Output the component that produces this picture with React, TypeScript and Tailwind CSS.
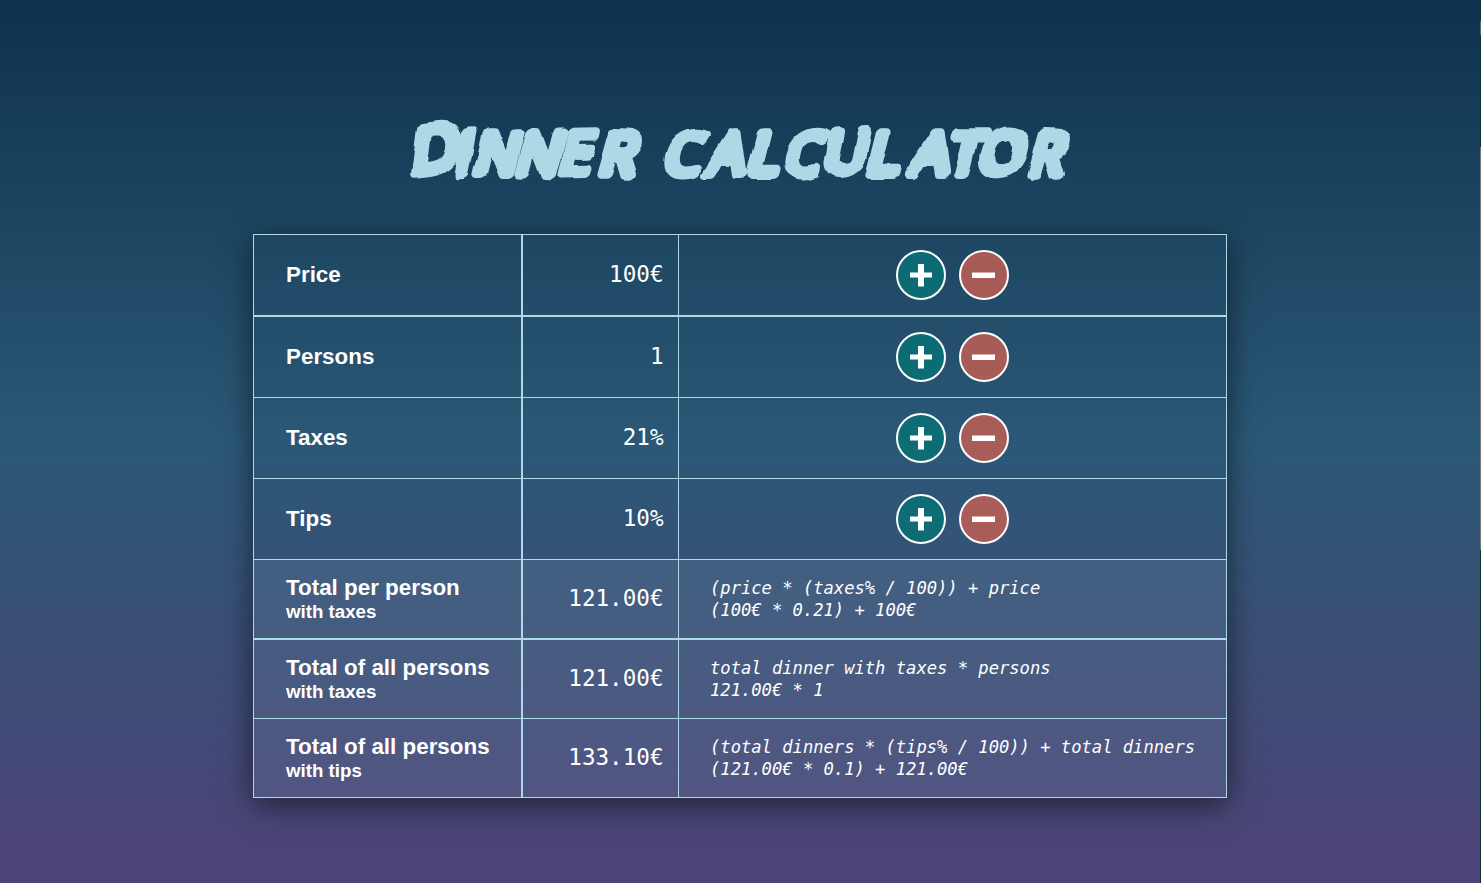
import React from "react";

type Row = {
  label: string;
  sub?: string;
  value: string;
  formula?: [string, string];
  size: string;
};

const rows: Row[] = [
  { label: "Price", value: "100€", size: "h-[82px] border-b-2" },
  { label: "Persons", value: "1", size: "h-[81px] border-b" },
  { label: "Taxes", value: "21%", size: "h-[81px] border-b" },
  { label: "Tips", value: "10%", size: "h-[81px] border-b" },
  {
    label: "Total per person",
    sub: "with taxes",
    value: "121.00€",
    formula: ["(price * (taxes% / 100)) + price", "(100€ * 0.21) + 100€"],
    size: "h-[80px] border-b-2 bg-[#add8e6]/10",
  },
  {
    label: "Total of all persons",
    sub: "with taxes",
    value: "121.00€",
    formula: ["total dinner with taxes * persons", "121.00€ * 1"],
    size: "h-[79px] border-b bg-[#add8e6]/10",
  },
  {
    label: "Total of all persons",
    sub: "with tips",
    value: "133.10€",
    formula: ["(total dinners * (tips% / 100)) + total dinners", "(121.00€ * 0.1) + 121.00€"],
    size: "h-[78px] bg-[#add8e6]/10",
  },
];

function Title() {
  return (
    <h1 className="mt-[100px] h-[100px] w-[700px]">
      <svg width="700" height="100" viewBox="390 100 700 100" className="block overflow-visible">
        <defs>
          <filter id="rough" x="-5%" y="-20%" width="110%" height="140%">
            <feTurbulence type="fractalNoise" baseFrequency="0.045" numOctaves="1" seed="7" result="noise" />
            <feDisplacementMap in="SourceGraphic" in2="noise" scale="7" xChannelSelector="R" yChannelSelector="G" />
          </filter>
        </defs>
        <g filter="url(#rough)">
          <text
            transform="translate(0 173.500) skewX(-14)"
            y="1 0 0 0 0 0 0 0 0 0 0 0 0 0 0 0 0"
            x="410 453 472 514 557 597 640 662 706 746 782 822 865 909 946 977 1026"
            rotate="-7 -3 0 1 -1 2 0 0 0 0 0 -3 0 0 0 -2 2"
            className="fill-[#add8e6] stroke-[#add8e6] font-['Open_Sans',sans-serif] text-[57px] uppercase [stroke-linejoin:round] [stroke-width:10px]"
          >
            <tspan className="text-[65px]">D</tspan>inner calculator
          </text>
        </g>
      </svg>
    </h1>
  );
}

function Buttons() {
  return (
    <div className="flex gap-[13px]">
      <button aria-label="Increase" className="flex size-[50px] items-center justify-center rounded-full border-2 border-white bg-[#087175]/85">
        <svg width="24" height="24" viewBox="0 0 24 24" fill="#fff">
          <path d="M9 1h6v8.500h8v5h-8v9h-6v-9h-8v-5h8z" />
        </svg>
      </button>
      <button aria-label="Decrease" className="flex size-[50px] items-center justify-center rounded-full border-2 border-white bg-[#c05e54]/85">
        <svg width="24" height="24" viewBox="0 0 24 24" fill="#fff">
          <path d="M0 9.500h23v5.500h-23z" />
        </svg>
      </button>
    </div>
  );
}

export default function App() {
  return (
    <div className="flex h-[883px] w-full overflow-hidden bg-[linear-gradient(#0e324c,#2b5876,#4e4376)] font-['Liberation_Sans',sans-serif] text-white">
      <main className="flex flex-1 flex-col items-center">
        <Title />
        <section className="mt-[34px] w-[974px] border border-[#add8e6] shadow-[0_7px_28px_rgba(0,0,0,0.55)]">
          {rows.map((row, i) => (
            <div key={i} className={"flex border-[#add8e6] " + row.size}>
              <div className={"flex w-[269px] flex-col justify-center border-r-2 border-[#add8e6] pl-8 font-bold whitespace-nowrap " + (row.sub ? "pb-[2px]" : "")}>
                <div className="text-[22.400px] leading-[26px]">{row.label}</div>
                {row.sub && <div className="text-[18.700px] leading-[21px]">{row.sub}</div>}
              </div>
              <div className="flex w-[156px] items-center justify-end border-r border-[#add8e6] pr-[14.500px] font-['DejaVu_Sans_Mono',monospace] text-[22.600px]">
                {row.value}
              </div>
              {row.formula ? (
                <div className="flex flex-1 flex-col justify-center pl-[31px] font-['DejaVu_Sans_Mono',monospace] text-[17.150px] leading-[22px] whitespace-pre italic">
                  <div>{row.formula[0]}</div>
                  <div>{row.formula[1]}</div>
                </div>
              ) : (
                <div className="flex flex-1 items-center justify-center">
                  <Buttons />
                </div>
              )}
            </div>
          ))}
        </section>
      </main>
      <div className="flex w-px flex-col bg-[#10302f]">
        <div className="mt-[21px] h-[14px] bg-[#5c6b70]" />
        <div className="mt-[112px] h-[403px] bg-[#777]" />
      </div>
    </div>
  );
}
